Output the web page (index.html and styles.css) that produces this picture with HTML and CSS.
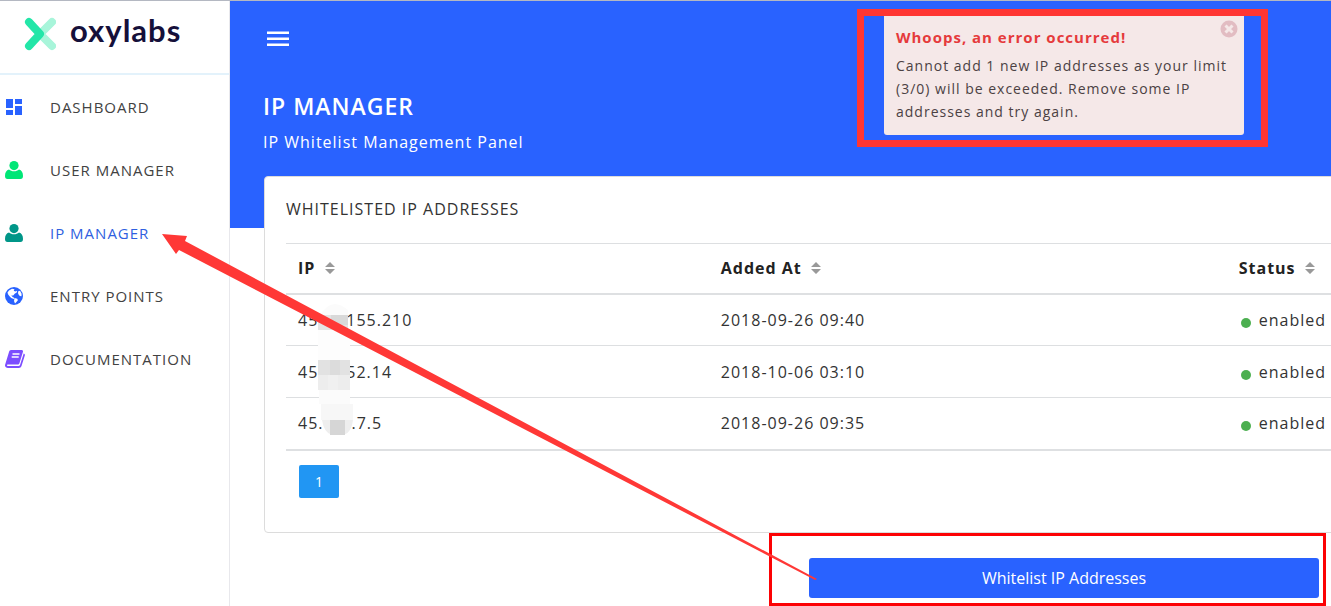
FILE: index.html
```html
<!DOCTYPE html>
<html lang="en">
<head>
    <meta charset="UTF-8">
    <meta name="viewport" content="width=device-width, initial-scale=1">
    <title>IP Manager - Oxylabs</title>
    <link rel="stylesheet" href="styles.css">
</head>
<body>

    <aside class="sidebar">
        <a class="logo" href="#">
            <svg class="logo-mark" viewBox="0 0 32 34" width="32" height="34" aria-hidden="true">
                <g fill="none" stroke-width="8" stroke-linecap="round" stroke-linejoin="round">
                    <path d="M28 5 16 17 28 29" stroke="#a8f5da"/>
                    <path d="M5 5 16 17 5 29" stroke="#23e6a8"/>
                </g>
            </svg>
            <span class="logo-text">oxylabs</span>
        </a>
        <nav class="menu">
            <a href="#">
                <svg viewBox="0 0 18 18" width="18" height="18" fill="#2962ff" aria-hidden="true">
                    <path d="M1 1h7v9H1zM10 1h7v5h-7zM1 12h7v5H1zM10 8h7v9h-7z"/>
                </svg>
                Dashboard
            </a>
            <a href="#">
                <svg viewBox="0 0 18 18" width="18" height="18" fill="#00e676" aria-hidden="true">
                    <circle cx="9" cy="4.6" r="4.6"/>
                    <path d="M4 8.500c2.600 2.400 7.400 2.400 10 0 2.600.6 4 3 4 6.500 0 2-.8 3-2.500 3h-13C.8 18 0 17 0 15c0-3.500 1.400-5.900 4-6.500z"/>
                </svg>
                User Manager
            </a>
            <a class="active" href="#">
                <svg viewBox="0 0 18 18" width="18" height="18" fill="#009688" aria-hidden="true">
                    <circle cx="9" cy="4.6" r="4.6"/>
                    <path d="M4 8.500c2.600 2.400 7.400 2.400 10 0 2.600.6 4 3 4 6.500 0 2-.8 3-2.500 3h-13C.8 18 0 17 0 15c0-3.500 1.400-5.900 4-6.500z"/>
                </svg>
                IP Manager
            </a>
            <a href="#">
                <svg viewBox="0 0 18 18" width="18" height="18" aria-hidden="true">
                    <circle cx="9" cy="9" r="9" fill="#2962ff"/>
                    <path d="M4 3.500 7 1.800l2.500.5-.8 1.500 1.600.6 1.500-.6.2 1.400-2.300 1.600-1.500 1.600-2 .2 1.500 1.500 1.800.8-.7 1-2.600-1L4.300 9 3 7.200 2.500 5.500z" fill="#fff"/>
                    <path d="m13 4.500 2-.7 1.600 3-.1 2.500-1.700-.4-1.600-2zM9.500 11l2.800.8.6 1.400-1.900 2.300-1 1-1-2.600z" fill="#fff"/>
                </svg>
                Entry Points
            </a>
            <a href="#">
                <svg viewBox="0 0 20 18" width="20" height="18" aria-hidden="true">
                    <path d="M6 0h10.500c1.200 0 1.800.9 1.400 2L14.500 13c-.3 1-1 1.500-2 1.500H2.700c-1 .2-1 1.500.2 1.500h10.600c.8 0 1.300-.4 1.600-1.200L18.700 3.500c1 .4 1.400 1.100 1.100 2L16.500 16c-.4 1.300-1.400 2-2.700 2H3c-2 0-3.400-1.600-2.900-3.300L4 2C4.300.8 5 0 6 0z" fill="#7c4dff"/>
                    <path d="M7.500 4h7M6.700 7h7" stroke="#fff" stroke-width="1.300"/>
                </svg>
                Documentation
            </a>
        </nav>
    </aside>

    <main class="main">
        <header class="page-header">
            <button class="menu-toggle" type="button" aria-label="Toggle menu">
                <svg viewBox="0 0 22 16" width="22" height="16" fill="#fff" aria-hidden="true">
                    <path d="M0 .5h22V3H0zM0 6.500h22V9H0zM0 12.500h22V15H0z"/>
                </svg>
            </button>
            <h1>IP MANAGER</h1>
            <p>IP Whitelist Management Panel</p>
        </header>

        <section class="card">
            <h2>Whitelisted IP Addresses</h2>
            <div class="table-wrap">
                <table>
                    <thead>
                        <tr>
                            <th class="col-ip">IP <svg class="sort" viewBox="0 0 10 12" width="10" height="12" aria-hidden="true"><path d="M5 0l5 5H0zM0 7h10l-5 5z"/></svg></th>
                            <th class="col-added">Added At <svg class="sort" viewBox="0 0 10 12" width="10" height="12" aria-hidden="true"><path d="M5 0l5 5H0zM0 7h10l-5 5z"/></svg></th>
                            <th class="col-status">Status <svg class="sort" viewBox="0 0 10 12" width="10" height="12" aria-hidden="true"><path d="M5 0l5 5H0zM0 7h10l-5 5z"/></svg></th>
                        </tr>
                    </thead>
                    <tbody>
                        <tr>
                            <td>45<span class="hidden-part"></span>155.210</td>
                            <td>2018-09-26 09:40</td>
                            <td><span class="dot"></span>enabled</td>
                        </tr>
                        <tr>
                            <td>45<span class="hidden-part"></span>52.14</td>
                            <td>2018-10-06 03:10</td>
                            <td><span class="dot"></span>enabled</td>
                        </tr>
                        <tr>
                            <td>45.<span class="hidden-part"></span>.7.5</td>
                            <td>2018-09-26 09:35</td>
                            <td><span class="dot"></span>enabled</td>
                        </tr>
                    </tbody>
                </table>
                <!-- masked part of the addresses -->
                <svg class="mask" viewBox="0 0 36 134" width="36" height="134" aria-hidden="true">
                    <path d="M6 8Q16-4 30 8v6H0z" fill="#fbfbfb"/>
                    <path d="M0 13h30v15H0z" fill="#e4e4e4"/>
                    <path d="M13 13h17v10H13z" fill="#d9d9d9"/>
                    <path d="M0 28h32v30H0z" fill="#fdfdfd"/>
                    <path d="M0 58h32v15H0z" fill="#e2e2e2"/>
                    <path d="M12 58h10v15H12z" fill="#dcdcdc"/>
                    <path d="M0 73h32v15H0z" fill="#ededed"/>
                    <path d="M10 73h10v15H10z" fill="#f0f0f0"/>
                    <path d="M1 88h31v14H1z" fill="#fbfbfb"/>
                    <path d="M3 102h32v16H3z" fill="#f7f7f7"/>
                    <path d="M4 118h31q-2 15-12 15H14Q6 131 4 118z" fill="#eee"/>
                    <path d="M12 118h15v15H12z" fill="#d6d6d6"/>
                </svg>
            </div>
            <div class="pagination">
                <button class="page-button" type="button">1</button>
            </div>
        </section>

        <div class="action-frame">
            <button class="whitelist-button" type="button">Whitelist IP Addresses</button>
        </div>
    </main>

    <div class="toast-frame">
        <div class="toast" role="alert">
            <strong>Whoops, an error occurred!</strong>
            <p>Cannot add 1 new IP addresses as your limit (3/0) will be exceeded. Remove some IP addresses and try again.</p>
            <button class="toast-close" type="button" aria-label="Close">
                <svg viewBox="0 0 18 18" width="18" height="18" aria-hidden="true">
                    <circle cx="9" cy="9" r="8.500" fill="#e2bcc2"/>
                    <path d="m5.500 5.500 7 7m0-7-7 7" stroke="#f5e8e8" stroke-width="3"/>
                </svg>
            </button>
        </div>
    </div>

    <svg class="arrow" viewBox="0 0 656 348" width="656" height="348" aria-hidden="true">
        <path d="M0 1 25 3 23 8 655 346 653 347 17 17 14 21z" fill="#ff3836"/>
    </svg>

</body>
</html>
```
FILE: styles.css
```css
* {
    margin: 0;
    padding: 0;
    box-sizing: border-box;
}

body {
    position: relative;
    display: flex;
    min-height: 100vh;
    overflow: hidden;
    border-top: 1px solid #b4b8c2;
    background-color: #fff;
    color: #333;
    font-family: 'Segoe UI', 'Open Sans', 'Noto Sans', sans-serif;
    font-size: 16px;
    letter-spacing: 1px;
}

button {
    border: none;
    background: none;
    font-family: inherit;
    cursor: pointer;
}

svg {
    display: block;
}

/* Sidebar */
.sidebar {
    flex: 0 0 230px;
    border-right: 1px solid #e8e8ec;
}

.logo {
    display: flex;
    align-items: center;
    gap: 14px;
    height: 74px;
    padding: 0 24px 6px;
    border-bottom: 2px solid #e3f2fb;
    color: #15103a;
    text-decoration: none;
}

.logo-text {
    padding-bottom: 8px;
    font-family: Lato, sans-serif;
    font-size: 31px;
    font-weight: bold;
    line-height: 32px;
}

.menu {
    display: flex;
    flex-direction: column;
}

.menu a {
    position: relative;
    display: flex;
    align-items: center;
    height: 63px;
    padding-left: 50px;
    color: #424242;
    font-size: 15px;
    text-decoration: none;
    text-transform: uppercase;
}

.menu a.active {
    color: #2f5fe0;
}

.menu svg {
    position: absolute;
    left: 5px;
}

/* Main area */
.main {
    flex: 1;
    min-width: 0;
    overflow: hidden;
}

.page-header {
    height: 227px;
    padding: 30px 33px;
    background-color: #2962ff;
    color: #fff;
}

.menu-toggle {
    display: block;
    padding: 0 4px;
}

.page-header h1 {
    margin-top: 42px;
    font-size: 23px;
    font-weight: 600;
    line-height: 34px;
}

.page-header p {
    margin-top: 7px;
    line-height: 24px;
}

.card {
    margin: -52px -34px 0 34px;
    padding: 0 21px;
    border: 1px solid #dcdcdc;
    border-radius: 4px;
    background-color: #fff;
}

.card h2 {
    padding-bottom: 2px;
    color: #333;
    font-size: 16px;
    font-weight: normal;
    line-height: 64px;
    text-transform: uppercase;
}

.table-wrap {
    position: relative;
}

table {
    width: 100%;
    table-layout: fixed;
    border-collapse: collapse;
    border-bottom: 2px solid #dee0e2;
}

th,
td {
    height: 52px;
    padding: 0 12px;
    border-top: 1px solid #dddfe1;
    text-align: left;
    white-space: nowrap;
}

th {
    height: 50px;
    color: #222;
    font-weight: bold;
}

thead {
    border-bottom: 2px solid #dee0e2;
}

.col-ip {
    width: 40%;
}

.col-added {
    width: 49%;
}

.sort {
    display: inline-block;
    margin-left: 4px;
    fill: #999;
}

.hidden-part {
    display: inline-block;
    width: 28px;
}

.mask {
    position: absolute;
    top: 59px;
    left: 32px;
}

.dot {
    display: inline-block;
    width: 10px;
    height: 10px;
    margin: 0 8px 0 2px;
    border-radius: 50%;
    background-color: #4caf50;
    vertical-align: -2px;
}

.pagination {
    padding: 14px 13px 34px;
}

.page-button {
    display: block;
    width: 40px;
    height: 33px;
    border-radius: 2px;
    background-color: #2196f3;
    color: #fff;
    font-size: 14px;
}

.action-frame {
    margin: 0 5px 0 539px;
    padding: 22px 4px 5px 37px;
    border: 3px solid #fc0204;
}

.whitelist-button {
    display: block;
    width: 100%;
    height: 40px;
    border-radius: 3px;
    background-color: #2962ff;
    color: #fff;
    font-size: 16px;
}

/* Error message */
.toast-frame {
    position: absolute;
    top: 8px;
    right: 63px;
    padding: 0 17px 5px 20px;
    border: 7px solid #ff3633;
}

.toast {
    position: relative;
    width: 360px;
    padding: 10px 12px 12px;
    border-radius: 0 0 3px 3px;
    background-color: #f5e8e8;
    color: #4b4143;
    font-size: 14px;
    line-height: 23px;
}

.toast strong {
    display: block;
    margin-bottom: 5px;
    color: #e53a3c;
    font-size: 15px;
}

.toast-close {
    position: absolute;
    top: 4px;
    right: 6px;
}

/* Arrow from the button to the menu item */
.arrow {
    position: absolute;
    top: 232px;
    left: 162px;
    pointer-events: none;
}
```
